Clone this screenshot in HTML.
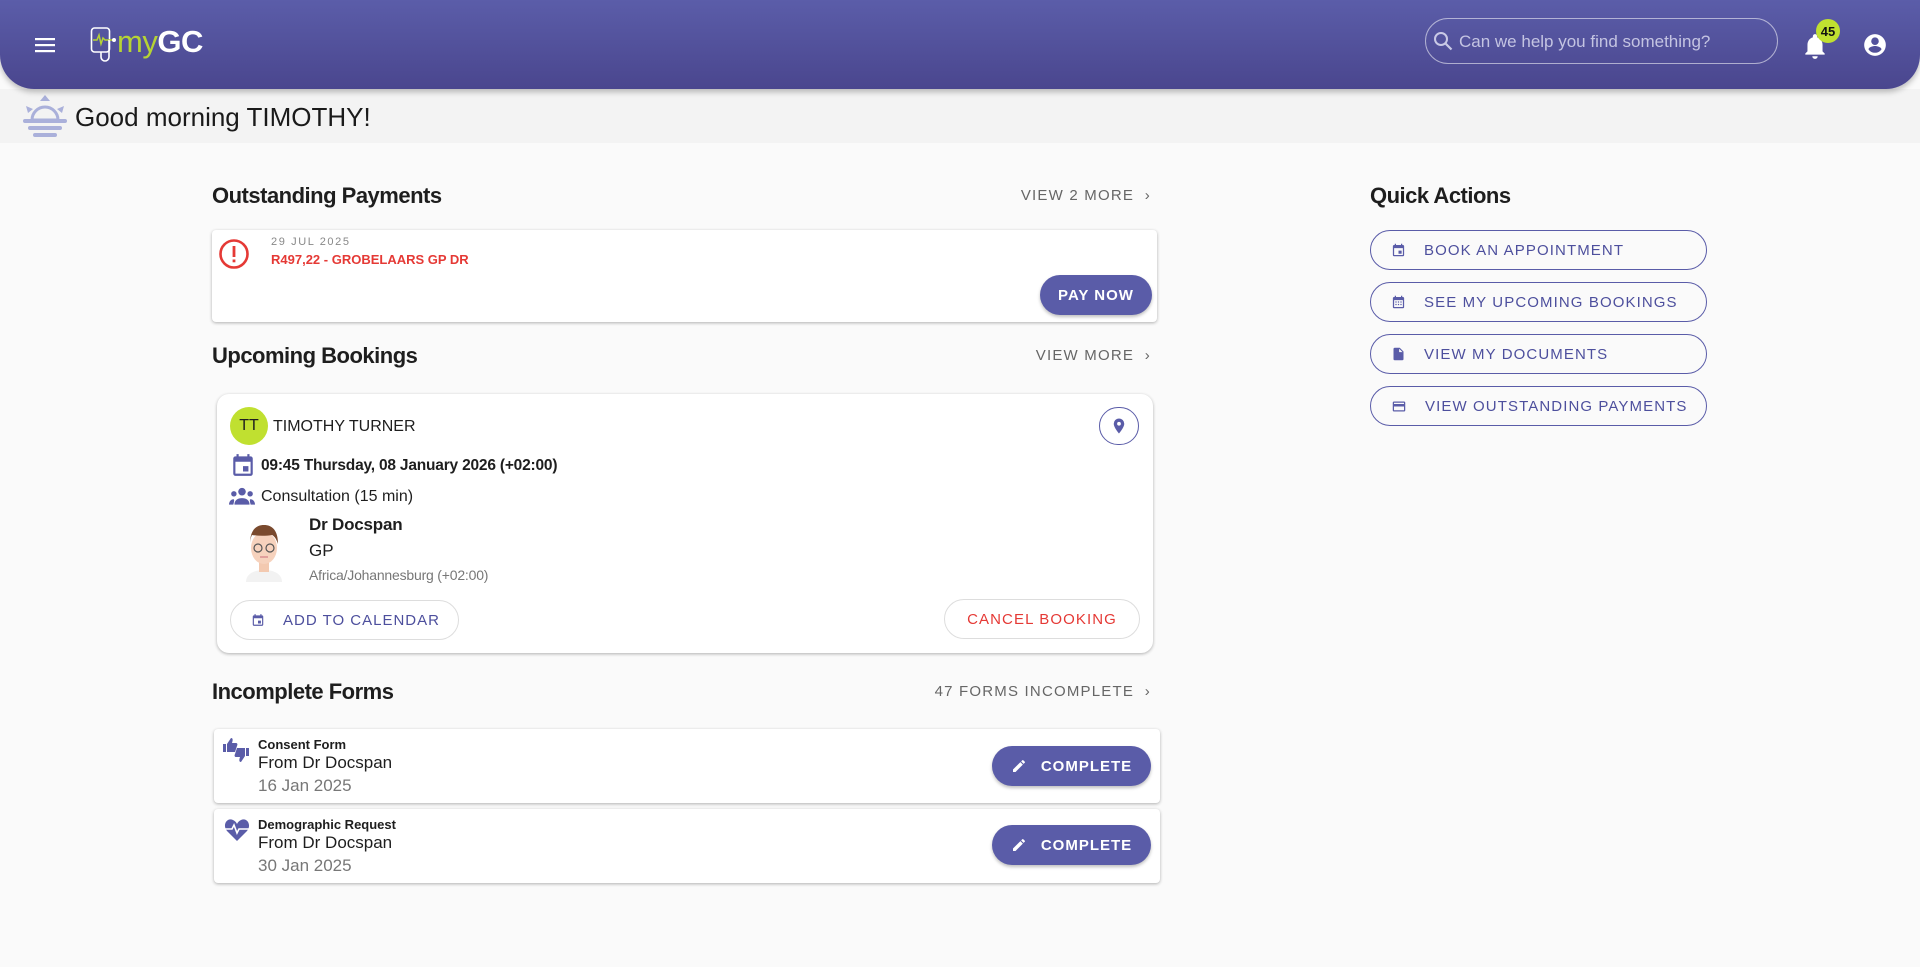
<!DOCTYPE html>
<html><head><meta charset="utf-8"><style>
*{box-sizing:border-box;margin:0;padding:0}
body{width:1920px;height:967px;background:#fafafa;font-family:"Liberation Sans",sans-serif;position:relative;overflow:hidden;color:#1e1e1e}
.a{position:absolute}
.hdr{left:0;top:0;width:1920px;height:89px;background:linear-gradient(#5b5da9,#4a468e);border-radius:0 0 34px 34px;box-shadow:0 3px 6px rgba(0,0,0,.25);z-index:2}
.band{left:0;top:89px;width:1920px;height:54px;background:#f3f3f3}
h2{position:absolute;font-size:22px;font-weight:bold;color:#1e1e1e;letter-spacing:-.5px}
.more{position:absolute;font-size:15px;color:#666;letter-spacing:1.2px}
.card{position:absolute;background:#fff;border-radius:4px;box-shadow:0 1px 3px rgba(0,0,0,.3)}
.btn{position:absolute;background:#5a5ca8;color:#fff;border-radius:20px;font-size:15px;font-weight:bold;letter-spacing:1px;display:flex;align-items:center;justify-content:center;box-shadow:0 2px 3px rgba(0,0,0,.25)}
.ob{position:absolute;border:1px solid #5a5ca8;border-radius:20px;color:#4d4f9d;font-size:15px;letter-spacing:1.1px;display:flex;align-items:center;white-space:nowrap}
.ob svg{margin:0 18px 0 20px}
</style></head><body>
<div class="a hdr">
 <svg class="a" style="left:33px;top:35px" width="24" height="20" viewBox="0 0 24 20"><rect x="2" y="3" width="20" height="2.2" fill="#fff"/><rect x="2" y="9" width="20" height="2.2" fill="#fff"/><rect x="2" y="15" width="20" height="2.2" fill="#fff"/></svg>
 <svg class="a" style="left:90px;top:26px" width="30" height="38" viewBox="0 0 30 38"><rect x="1.5" y="2" width="18" height="24" rx="3" fill="none" stroke="#fff" stroke-width="1.6"/><path d="M3 14h4l2-5 2 9 2-6 2 2h9" fill="none" stroke="#b6d334" stroke-width="1.5"/><path d="M11 26v5a4 4 0 0 0 8 0v-17" fill="none" stroke="#fff" stroke-width="1.6"/><circle cx="24" cy="14" r="2" fill="#fff"/></svg>
 <div class="a" style="left:117px;top:24px;font-size:31px;color:#b6d334;letter-spacing:-.5px">my<b style="color:#fff">GC</b></div>
 <div class="a" style="left:1425px;top:18px;width:353px;height:46px;border:1px solid rgba(255,255,255,.55);border-radius:23px"></div>
 <svg class="a" style="left:1432px;top:30px" width="22" height="22" viewBox="0 0 22 22"><circle cx="9" cy="9" r="6" fill="none" stroke="#c9c9e6" stroke-width="2"/><path d="M13.5 13.5l6 6" stroke="#c9c9e6" stroke-width="2.2"/></svg>
 <div class="a" style="left:1459px;top:32px;font-size:17px;color:#c4c4e2">Can we help you find something?</div>
 <svg class="a" style="left:1802px;top:32px" width="26" height="28" viewBox="0 0 24 26"><path d="M12 25a2.5 2.5 0 0 0 2.5-2.5h-5A2.5 2.5 0 0 0 12 25zm7-7v-6c0-3.5-2-6.3-5-7V4a2 2 0 0 0-4 0v1c-3 .7-5 3.5-5 7v6l-2 2v1h18v-1z" fill="#fff"/></svg>
 <div class="a" style="left:1816px;top:19px;width:24px;height:24px;border-radius:12px;background:#c0e030;color:#111;font-size:13px;font-weight:bold;display:flex;align-items:center;justify-content:center">45</div>
 <svg class="a" style="left:1862px;top:32px" width="26" height="26" viewBox="0 0 24 24"><path d="M12 2a10 10 0 1 0 0 20 10 10 0 0 0 0-20zm0 3a3.5 3.5 0 1 1 0 7 3.5 3.5 0 0 1 0-7zm0 14.2a7.5 7.5 0 0 1-6-3.2c0-2 4-3.1 6-3.1s6 1.1 6 3.1a7.5 7.5 0 0 1-6 3.2z" fill="#fff"/></svg>
</div>
<div class="a band"></div>
<svg class="a" style="left:22px;top:94px" width="46" height="46" viewBox="0 0 46 46"><path d="M23 1l5 6h-10z" fill="#aab0da"/><path d="M4 12l7 3-5 4z M42 12l-7 3 5 4z" fill="#aab0da"/><path d="M10 26a13 13 0 0 1 26 0z" fill="none" stroke="#aab0da" stroke-width="3"/><rect x="1" y="25" width="44" height="4" rx="2" fill="#aab0da"/><rect x="6" y="32" width="34" height="4" rx="2" fill="#aab0da"/><rect x="11" y="39" width="24" height="4" rx="2" fill="#aab0da"/></svg>
<div class="a" style="left:75px;top:102px;font-size:26px;color:#1a1a1a">Good morning TIMOTHY!</div>

<h2 style="left:212px;top:183px">Outstanding Payments</h2>
<div class="more" style="right:769px;top:187px">VIEW 2 MORE &nbsp;›</div>
<div class="card" style="left:212px;top:230px;width:945px;height:92px">
 <svg class="a" style="left:6px;top:8px" width="32" height="32" viewBox="0 0 32 32"><circle cx="16" cy="16" r="13.5" fill="none" stroke="#e53935" stroke-width="2.6"/><rect x="14.6" y="8" width="2.8" height="11" fill="#e53935"/><rect x="14.6" y="21.5" width="2.8" height="2.8" fill="#e53935"/></svg>
 <div class="a" style="left:59px;top:6px;font-size:11px;color:#888;letter-spacing:1.6px">29 JUL 2025</div>
 <div class="a" style="left:59px;top:22px;font-size:13px;font-weight:bold;color:#e53935">R497,22 - GROBELAARS GP DR</div>
 <div class="btn" style="left:828px;top:45px;width:112px;height:40px">PAY NOW</div>
</div>

<h2 style="left:212px;top:343px">Upcoming Bookings</h2>
<div class="more" style="right:769px;top:347px">VIEW MORE &nbsp;›</div>
<div class="card" style="left:217px;top:394px;width:936px;height:259px;border-radius:12px">
 <div class="a" style="left:13px;top:13px;width:38px;height:38px;border-radius:19px;background:#c0e030;font-size:16px;display:flex;align-items:center;justify-content:center">TT</div>
 <div class="a" style="left:56px;top:24px;font-size:16px">TIMOTHY TURNER</div>
 <div class="a" style="left:882px;top:13px;width:40px;height:38px;border:1px solid #5a5ca8;border-radius:20px"></div>
 <svg class="a" style="left:893px;top:22px" width="18" height="20" viewBox="0 0 24 24"><path d="M12 2a7 7 0 0 0-7 7c0 5 7 13 7 13s7-8 7-13a7 7 0 0 0-7-7zm0 9.5a2.5 2.5 0 1 1 0-5 2.5 2.5 0 0 1 0 5z" fill="#5a5ca8"/></svg>
 <svg class="a" style="left:13px;top:57px" width="26" height="28" viewBox="0 0 24 24"><path d="M19 4h-1V2h-2v2H8V2H6v2H5a2 2 0 0 0-2 2v14a2 2 0 0 0 2 2h14a2 2 0 0 0 2-2V6a2 2 0 0 0-2-2zm0 16H5V9h14zm-7-7h5v5h-5z" fill="#5a5ca8"/></svg>
 <div class="a" style="left:44px;top:63px;font-size:15.5px;font-weight:bold;letter-spacing:-.2px">09:45 Thursday, 08 January 2026 (+02:00)</div>
 <svg class="a" style="left:12px;top:92px" width="26" height="20" viewBox="0 0 24 18"><circle cx="12" cy="5" r="3.5" fill="#5a5ca8"/><circle cx="4.5" cy="7" r="2.5" fill="#5a5ca8"/><circle cx="19.5" cy="7" r="2.5" fill="#5a5ca8"/><path d="M5 17c0-4 3-6 7-6s7 2 7 6zM0 17c0-3 2-5 4-5 1 0 1 1 0 5zM24 17c0-3-2-5-4-5-1 0-1 1 0 5z" fill="#5a5ca8"/></svg>
 <div class="a" style="left:44px;top:94px;font-size:16px">Consultation (15 min)</div>
 <svg class="a" style="left:25px;top:126px" width="44" height="62" viewBox="0 0 44 62"><path d="M4 62c0-8 8-12 18-12s18 4 18 12z" fill="#f2f2f2"/><rect x="17" y="40" width="10" height="12" fill="#f3c9b0"/><ellipse cx="22" cy="28" rx="13" ry="16" fill="#f6d2bd"/><path d="M8 24c0-14 6-19 14-19s14 5 14 19c-2-6-4-8-6-9-6 1-13 1-20 0-1 2-2 5-2 9z" fill="#7a4a2e"/><circle cx="16" cy="28" r="4" fill="none" stroke="#555" stroke-width="1.2"/><circle cx="28" cy="28" r="4" fill="none" stroke="#555" stroke-width="1.2"/><path d="M18 37h8" stroke="#d89090" stroke-width="1.5"/></svg>
 <div class="a" style="left:92px;top:121px;font-size:17px;font-weight:bold;letter-spacing:-.2px">Dr Docspan</div>
 <div class="a" style="left:92px;top:147px;font-size:17px">GP</div>
 <div class="a" style="left:92px;top:173px;font-size:14px;color:#777;letter-spacing:-.2px">Africa/Johannesburg (+02:00)</div>
 <div class="ob" style="left:13px;top:206px;width:229px;height:40px;border-color:#ddd;font-size:15px;letter-spacing:1px"><svg width="14" height="16" viewBox="0 0 24 24"><path d="M19 4h-1V2h-2v2H8V2H6v2H5a2 2 0 0 0-2 2v14a2 2 0 0 0 2 2h14a2 2 0 0 0 2-2V6a2 2 0 0 0-2-2zm0 16H5V9h14zm-7-7h5v5h-5z" fill="#5a5ca8"/></svg>ADD TO CALENDAR</div>
 <div class="ob" style="left:727px;top:205px;width:196px;height:40px;border-color:#ddd;color:#e53935;justify-content:center">CANCEL BOOKING</div>
</div>

<h2 style="left:212px;top:679px">Incomplete Forms</h2>
<div class="more" style="right:769px;top:683px">47 FORMS INCOMPLETE &nbsp;›</div>
<div class="card" style="left:214px;top:729px;width:946px;height:74px">
 <svg class="a" style="left:8px;top:8px" width="28" height="26" viewBox="0 0 28 26"><path d="M1 7h3v8H1zM5 7l4-6c2 0 2 2 1 5h4c1 0 2 1 1 3l-2 6H5z" fill="#5a5ca8"/><path d="M27 19h-3v-8h3zM23 19l-4 6c-2 0-2-2-1-5h-4c-1 0-2-1-1-3l2-6h8z" fill="#5a5ca8"/></svg>
 <div class="a" style="left:44px;top:8px;font-size:13px;font-weight:bold">Consent Form</div>
 <div class="a" style="left:44px;top:24px;font-size:17px">From Dr Docspan</div>
 <div class="a" style="left:44px;top:47px;font-size:17px;color:#777">16 Jan 2025</div>
 <div class="btn" style="left:778px;top:17px;width:159px;height:40px"><svg width="16" height="16" viewBox="0 0 24 24" style="margin-right:14px"><path d="M3 17.2V21h3.8L17.8 9.9l-3.7-3.7zM20.7 7a1 1 0 0 0 0-1.4l-2.3-2.3a1 1 0 0 0-1.4 0l-1.8 1.8 3.7 3.7z" fill="#fff"/></svg>COMPLETE</div>
</div>
<div class="card" style="left:214px;top:809px;width:946px;height:74px">
 <svg class="a" style="left:10px;top:10px" width="26" height="22" viewBox="0 0 26 22"><path d="M13 22L3 12C-2 6 3-2 9 1c2 1 3 2 4 4 1-2 2-3 4-4 6-3 11 5 6 11z" fill="#5a5ca8"/><path d="M1 10h7l2-4 3 8 2-4h10" fill="none" stroke="#fff" stroke-width="1.6"/></svg>
 <div class="a" style="left:44px;top:8px;font-size:13px;font-weight:bold">Demographic Request</div>
 <div class="a" style="left:44px;top:24px;font-size:17px">From Dr Docspan</div>
 <div class="a" style="left:44px;top:47px;font-size:17px;color:#777">30 Jan 2025</div>
 <div class="btn" style="left:778px;top:16px;width:159px;height:40px"><svg width="16" height="16" viewBox="0 0 24 24" style="margin-right:14px"><path d="M3 17.2V21h3.8L17.8 9.9l-3.7-3.7zM20.7 7a1 1 0 0 0 0-1.4l-2.3-2.3a1 1 0 0 0-1.4 0l-1.8 1.8 3.7 3.7z" fill="#fff"/></svg>COMPLETE</div>
</div>

<h2 style="left:1370px;top:183px">Quick Actions</h2>
<div class="ob" style="left:1370px;top:230px;width:337px;height:40px"><svg width="15" height="16" viewBox="0 0 24 24"><path d="M19 4h-1V2h-2v2H8V2H6v2H5a2 2 0 0 0-2 2v14a2 2 0 0 0 2 2h14a2 2 0 0 0 2-2V6a2 2 0 0 0-2-2zm0 16H5V9h14zm-7-7h5v5h-5z" fill="#5a5ca8"/></svg>BOOK AN APPOINTMENT</div>
<div class="ob" style="left:1370px;top:282px;width:337px;height:40px"><svg width="15" height="16" viewBox="0 0 24 24"><path d="M19 4h-1V2h-2v2H8V2H6v2H5a2 2 0 0 0-2 2v14a2 2 0 0 0 2 2h14a2 2 0 0 0 2-2V6a2 2 0 0 0-2-2zm0 16H5V9h14zM7 11h2v2H7zm4 0h2v2h-2zm4 0h2v2h-2zM7 15h2v2H7zm4 0h2v2h-2zm4 0h2v2h-2z" fill="#5a5ca8"/></svg>SEE MY UPCOMING BOOKINGS</div>
<div class="ob" style="left:1370px;top:334px;width:337px;height:40px"><svg width="15" height="16" viewBox="0 0 24 24"><path d="M14 2H6a2 2 0 0 0-2 2v16a2 2 0 0 0 2 2h12a2 2 0 0 0 2-2V8zm-1 7V3.5L18.5 9z" fill="#5a5ca8"/></svg>VIEW MY DOCUMENTS</div>
<div class="ob" style="left:1370px;top:386px;width:337px;height:40px"><svg width="16" height="15" viewBox="0 0 24 24"><path d="M20 4H4a2 2 0 0 0-2 2v12a2 2 0 0 0 2 2h16a2 2 0 0 0 2-2V6a2 2 0 0 0-2-2zm0 14H4v-6h16zm0-10H4V6h16z" fill="#5a5ca8"/></svg>VIEW OUTSTANDING PAYMENTS</div>
</body></html>
